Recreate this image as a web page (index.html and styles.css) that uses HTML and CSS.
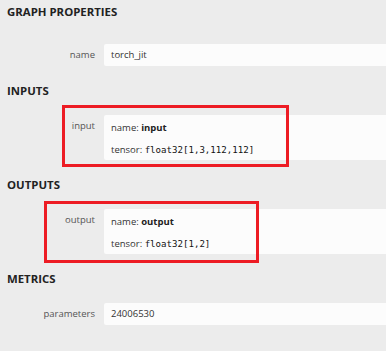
FILE: index.html
```html
<!DOCTYPE html>
<html>
<head>
<meta charset="utf-8">
<link rel="stylesheet" href="styles.css">
</head>
<body>
<div class="sidebar">
  <div class="header h-first">Graph Properties</div>
  <div class="item">
    <div class="label">name</div>
    <div class="value single">torch_jit</div>
  </div>

  <div class="header">Inputs</div>
  <div class="item">
    <div class="label">input</div>
    <div class="value multi">
      <div class="line">name: <b>input</b></div>
      <div class="line">tensor: <code>float32[1,3,112,112]</code></div>
    </div>
  </div>

  <div class="header">Outputs</div>
  <div class="item">
    <div class="label">output</div>
    <div class="value multi">
      <div class="line">name: <b>output</b></div>
      <div class="line">tensor: <code>float32[1,2]</code></div>
    </div>
  </div>

  <div class="header">Metrics</div>
  <div class="item">
    <div class="label">parameters</div>
    <div class="value single">24006530</div>
  </div>

  <div class="mark mark-input"></div>
  <div class="mark mark-output"></div>
</div>
</body>
</html>
```
FILE: styles.css
```css
html, body {
  margin: 0;
  padding: 0;
  background: #ececec;
}
.sidebar {
  position: relative;
  width: 386px;
  height: 351px;
  overflow: hidden;
  font-family: "Open Sans", "Noto Sans", sans-serif;
  font-size: 9.5px;
  color: #333;
}
.header {
  padding-left: 7px;
  font-weight: 700;
  font-size: 11.4px;
  line-height: 16px;
  height: 16px;
  text-transform: uppercase;
  color: #222;
  margin-top: 17px;
  margin-bottom: 16px;
}
.h-first {
  margin-top: 4px;
  margin-bottom: 24px;
}
.item {
  display: grid;
  grid-template-columns: 104px 1fr;
  align-items: start;
}
.label {
  text-align: right;
  padding-right: 9px;
  color: #555;
  line-height: 22px;
}
.value {
  background: #fcfcfc;
  border-radius: 2px 0 0 2px;
  padding: 0 7px;
  color: #333;
}
.value.single {
  line-height: 22px;
  height: 22px;
}
.value.multi {
  padding-top: 3px;
  padding-bottom: 0;
}
.line {
  line-height: 20px;
}
.line + .line {
  margin-top: 2px;
}
.value b {
  font-weight: 700;
  color: #222;
}
code {
  font-family: "DejaVu Sans Mono", "Liberation Mono", monospace;
  font-size: 9.1px;
  color: #111;
}
.mark {
  position: absolute;
  border: 3px solid #ed1c24;
  box-sizing: border-box;
}
.mark-input {
  left: 62px;
  top: 105px;
  width: 227px;
  height: 62px;
}
.mark-output {
  left: 44px;
  top: 201px;
  width: 215px;
  height: 62px;
}
```
